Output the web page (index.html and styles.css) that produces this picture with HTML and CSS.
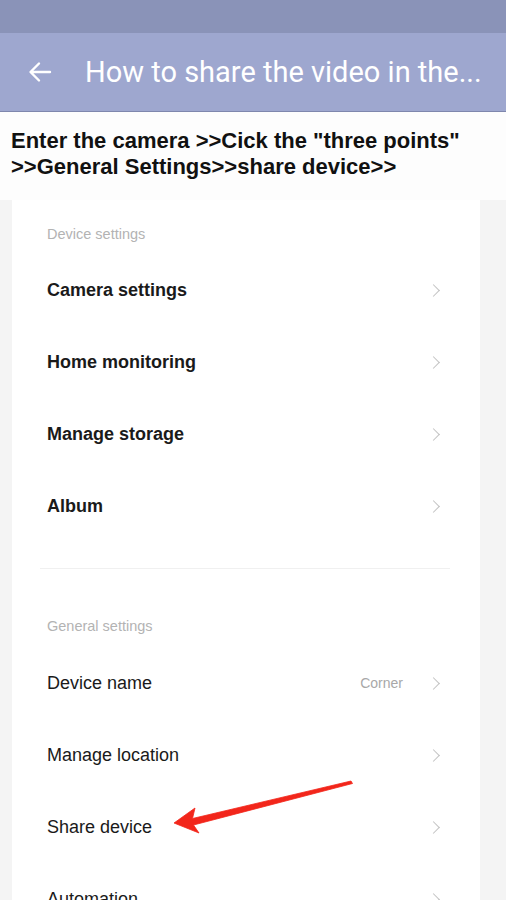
FILE: index.html
```html
<!DOCTYPE html>
<html lang="en">
<head>
    <meta charset="UTF-8">
    <meta name="viewport" content="width=device-width, initial-scale=1.0">
    <title>How to share the video</title>
    <link rel="stylesheet" href="styles.css">
</head>
<body>

    <div class="status-bar"></div>

    <!-- Top app bar -->
    <header class="app-bar">
        <svg class="back-icon" width="26" height="26" viewBox="0 0 26 26">
            <path d="M23 13H4M12 4.5L3.5 13L12 21.5" fill="none" stroke="#fff" stroke-width="2.4" stroke-linecap="round" stroke-linejoin="round"/>
        </svg>
        <h1 class="title">How to share the video in the...</h1>
    </header>

    <p class="intro">Enter the camera &gt;&gt;Cick the "three points" &gt;&gt;General Settings&gt;&gt;share device&gt;&gt;</p>

    <div class="shot">
        <div class="panel">
            <div class="group-label">Device settings</div>
            <div class="row bold"><span>Camera settings</span><span class="chev"></span></div>
            <div class="row bold"><span>Home monitoring</span><span class="chev"></span></div>
            <div class="row bold"><span>Manage storage</span><span class="chev"></span></div>
            <div class="row bold"><span>Album</span><span class="chev"></span></div>

            <hr class="divider">

            <div class="group-label second">General settings</div>
            <div class="row"><span>Device name</span><span class="value">Corner</span><span class="chev"></span></div>
            <div class="row"><span>Manage location</span><span class="chev"></span></div>
            <div class="row"><span>Share device</span><span class="chev"></span></div>
            <div class="row"><span>Automation</span><span class="chev"></span></div>
        </div>

        <!-- red pointer drawn over the screenshot -->
        <svg class="pointer" width="200" height="60" viewBox="0 0 200 60">
            <path d="M2 44 L23 29 L20.5 39.5 L179 2 L180.5 4.5 L21.5 46 L27 54 Z" fill="#f2261b" stroke="#f2261b" stroke-width="0.8" stroke-linejoin="round"/>
        </svg>
    </div>

</body>
</html>
```

FILE: styles.css
```css
* {
    margin: 0;
    padding: 0;
    box-sizing: border-box;
}

body {
    font-family: "Liberation Sans", Arial, sans-serif;
    background-color: #fdfdfd;
    width: 506px;
    height: 900px;
    overflow: hidden;
}

.status-bar {
    height: 33px;
    background-color: #8a93b8;
}

.app-bar {
    height: 79px;
    background-color: #9ea7cf;
    border-bottom: 1px solid #7f87ad;
    display: flex;
    align-items: center;
    padding-left: 27px;
}

.back-icon {
    flex-shrink: 0;
    margin-right: 32px;
}

.title {
    font-family: Roboto, "Liberation Sans", sans-serif;
    font-weight: 400;
    font-size: 29px;
    color: #fff;
    white-space: nowrap;
}

.intro {
    font-size: 22px;
    font-weight: bold;
    line-height: 26px;
    color: #111;
    padding: 16px 11px 20px;
}

.shot {
    position: relative;
    background-color: #f4f4f4;
    padding-left: 12px;
    padding-right: 26px;
}

.panel {
    background-color: #fff;
    padding: 24px 40px 0 35px;
}

.group-label {
    font-size: 14.5px;
    line-height: 20px;
    color: #b3b3b3;
    margin-bottom: 10px;
}

.group-label.second {
    margin-top: 47px;
    margin-bottom: 11px;
}

.row {
    height: 72px;
    display: flex;
    align-items: center;
    font-size: 18px;
    color: #1a1a1a;
}

.row span:first-child {
    flex: 1;
}

.row.bold {
    font-weight: bold;
}

.value {
    font-size: 14px;
    color: #a8a8a8;
    margin-right: 26px;
}

.chev {
    width: 9px;
    height: 9px;
    border-top: 1.5px solid #c2c2c2;
    border-right: 1.5px solid #c2c2c2;
    transform: rotate(45deg);
    margin-right: 2px;
}

.divider {
    border: none;
    border-top: 1px solid #f0f0f0;
    margin: 26px -10px 0 -7px;
}

.pointer {
    position: absolute;
    left: 172px;
    top: 579px;
}
```
